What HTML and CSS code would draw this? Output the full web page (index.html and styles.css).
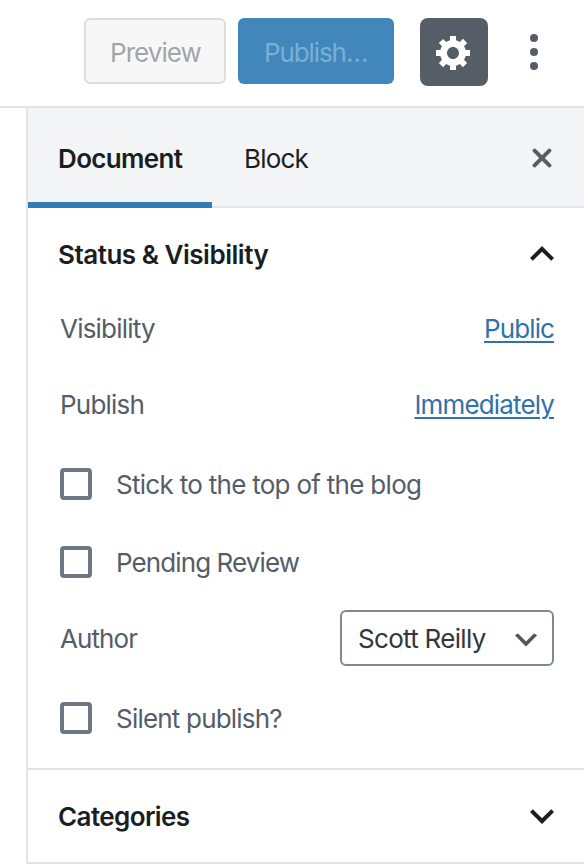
FILE: index.html
```html
<!DOCTYPE html>
<html lang="en">
<head>
<meta charset="utf-8">
<title>Document settings</title>
<link rel="stylesheet" href="styles.css">
</head>
<body>
<header class="toolbar">
  <button class="button preview"><span class="t-preview">Preview</span></button>
  <button class="button publish"><span class="t-publish-btn">Publish…</span></button>
  <button class="settings" aria-label="Settings">
    <svg width="40" height="40" viewBox="0 0 20 20"><path fill="currentColor" d="M18 12h-2.18c-.17.7-.44 1.35-.81 1.93l1.54 1.54-2.1 2.1-1.54-1.54c-.58.36-1.23.63-1.91.79V19H8v-2.18c-.68-.16-1.33-.43-1.91-.79l-1.54 1.54-2.12-2.12 1.54-1.54c-.36-.58-.63-1.23-.79-1.91H1V9.03h2.17c.16-.7.44-1.35.8-1.94L2.43 5.55l2.1-2.1 1.54 1.54c.58-.37 1.24-.64 1.93-.81V2h3v2.18c.68.16 1.33.43 1.91.79l1.54-1.54 2.12 2.12-1.54 1.54c.36.59.64 1.24.8 1.94H18V12zm-8.5 1.5c1.66 0 3-1.34 3-3s-1.34-3-3-3-3 1.34-3 3 1.34 3 3 3z"/></svg>
  </button>
  <button class="more" aria-label="More">
    <svg width="8" height="36" viewBox="0 0 8 36" fill="currentColor"><circle cx="4" cy="4" r="4"/><circle cx="4" cy="18" r="4"/><circle cx="4" cy="32" r="4"/></svg>
  </button>
</header>
<aside class="sidebar">
  <nav class="tabs">
    <button class="tab active"><span class="t-document">Document</span></button>
    <button class="tab"><span class="t-block">Block</span></button>
    <button class="close" aria-label="Close">
      <svg width="20" height="20" viewBox="0 0 20 20" fill="none" stroke="currentColor" stroke-width="4" stroke-linecap="round"><path d="M2.6 2.6l14.8 14.8M17.4 2.6L2.6 17.4"/></svg>
    </button>
  </nav>
  <section class="panel">
    <h2 class="panel-title"><span class="low t-status">Status &amp; Visibility</span>
      <svg width="48" height="48" viewBox="0 0 24 24"><path fill="currentColor" d="M12 8l-6 6 1.41 1.41L12 10.83l4.59 4.58L18 14z"/></svg>
    </h2>
    <div class="row first"><span class="t-visibility">Visibility</span><a class="t-public">Public</a></div>
    <div class="row"><span class="t-publish">Publish</span><a class="t-immediately">Immediately</a></div>
    <label class="row check"><span class="box"></span><span class="low t-stick">Stick to the top of the blog</span></label>
    <label class="row check pending"><span class="box"></span><span class="low t-pending">Pending Review</span></label>
    <div class="row author"><span class="low t-author">Author</span>
      <div class="select"><span class="low t-scott">Scott Reilly</span>
        <svg width="32" height="32" viewBox="0 0 20 20"><path fill="#555" d="M5 6l5 5 5-5 2 1-7 7-7-7 2-1z"/></svg>
      </div>
    </div>
    <label class="row check silent"><span class="box"></span><span class="low t-silent">Silent publish?</span></label>
  </section>
  <section class="panel categories">
    <h2 class="panel-title"><span class="low t-categories">Categories</span>
      <svg width="48" height="48" viewBox="0 0 24 24"><path fill="currentColor" d="M7.41 8.59L12 13.17l4.59-4.58L18 10l-6 6-6-6z"/></svg>
    </h2>
  </section>
</aside>
</body>
</html>
```
FILE: styles.css
```css
* { box-sizing: border-box; }
body {
  margin: 0;
  background: #fff;
  color: #555d66;
  font: 26px/36px Inter, "Liberation Sans", sans-serif;
  white-space: nowrap;
}
button {
  margin: 0;
  padding: 0;
  border: 0;
  background: none;
  font: inherit;
  color: inherit;
}
svg { display: block; flex: none; }

.toolbar {
  display: flex;
  align-items: flex-start;
  height: 108px;
  padding: 18px 0 0 84px;
  border-bottom: 2px solid #e2e4e7;
}
.button {
  height: 66px;
  margin-right: 12px;
  border-radius: 6px;
  text-align: left;
  padding-top: 4px;
}
.preview {
  width: 142px;
  padding-left: 24px;
  border: 2px solid #ddd;
  background: #f7f7f7;
  color: #a0a5aa;
  text-shadow: 0 2px 0 #fff;
}
.publish {
  width: 156px;
  padding-left: 26px;
  background: #4187bb;
  color: #7bafd3;
}
.settings {
  display: flex;
  align-items: center;
  justify-content: center;
  width: 68px;
  height: 68px;
  margin-left: 14px;
  border-radius: 8px;
  background: #555d66;
  color: #fff;
}
.more {
  display: flex;
  align-items: center;
  height: 68px;
  margin-left: 42px;
  color: #555d66;
}

.sidebar {
  height: 756px;
  margin-left: 26px;
  border-left: 2px solid #e2e4e7;
  border-bottom: 2px solid #e2e4e7;
}
.tabs {
  display: flex;
  height: 100px;
  background: #f3f4f5;
  box-shadow: inset 0 -2px #e2e4e7;
}
.tab {
  padding: 2px 0 0 32px;
  color: #191e23;
  text-align: left;
}
.active {
  width: 184px;
  padding: 8px 0 0 30px;
  border-bottom: 6px solid #347ab7;
  font-weight: 600;
}
.close {
  display: flex;
  align-items: center;
  margin: 0 32px 0 auto;
  color: #555d66;
}

.panel { padding: 22px 30px 0 32px; }
.panel-title {
  display: flex;
  align-items: center;
  justify-content: space-between;
  height: 48px;
  margin: 0 -12px 0 -2px;
  color: #191e23;
  font-size: 26px;
  font-weight: 600;
}
.row {
  display: flex;
  align-items: center;
  justify-content: space-between;
  height: 36px;
  margin-top: 40px;
}
.first { margin-top: 33px; }
.low { padding-top: 2px; }
.row a {
  color: #2f73a9;
  text-decoration: underline;
  text-decoration-thickness: 2px;
  text-underline-offset: 3px;
}
.check {
  justify-content: flex-start;
  gap: 24px;
  margin-top: 43px;
}
.box {
  width: 32px;
  height: 32px;
  border: 4px solid #6c7781;
  border-radius: 4px;
}
.pending { margin-top: 42px; }
.author { height: 56px; margin-top: 30px; }
.select {
  display: flex;
  align-items: center;
  justify-content: space-between;
  width: 214px;
  height: 56px;
  padding: 0 10px 0 16px;
  border: 2px solid #7e8993;
  border-radius: 6px;
  color: #32373c;
}
.select svg { margin-top: 3px; }
.silent { margin-top: 34px; }
.categories {
  margin-top: 32px;
  border-top: 2px solid #e2e4e7;
}

.t-preview { letter-spacing: -.95px; }
.t-publish-btn { letter-spacing: -1.1px; }
.t-document { letter-spacing: -.65px; }
.t-block { letter-spacing: -.8px; }
.t-status { letter-spacing: -.48px; }
.t-visibility { letter-spacing: -.8px; }
.t-public { letter-spacing: -.9px; }
.t-publish { letter-spacing: -.8px; }
.t-immediately { letter-spacing: -.86px; }
.t-stick { letter-spacing: -.71px; }
.t-pending { letter-spacing: -.9px; }
.t-author { letter-spacing: -.9px; }
.t-scott { letter-spacing: -.7px; }
.t-silent { letter-spacing: -.8px; }
.t-categories { letter-spacing: -.6px; }
```
